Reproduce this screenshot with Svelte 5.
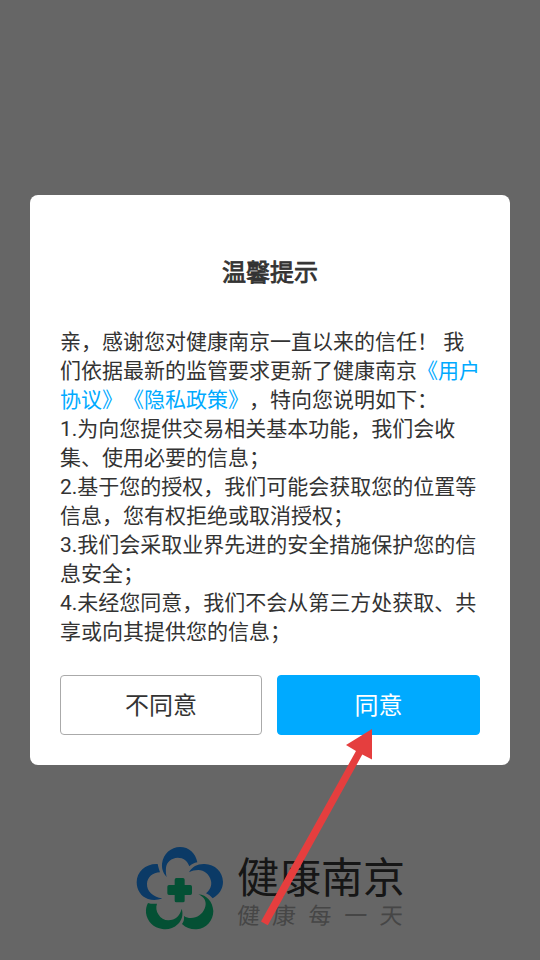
<script>
	let show = true;

	const title = '温馨提示';
	const items = [
		'1.为向您提供交易相关基本功能，我们会收集、使用必要的信息；',
		'2.基于您的授权，我们可能会获取您的位置等信息，您有权拒绝或取消授权；',
		'3.我们会采取业界先进的安全措施保护您的信息安全；',
		'4.未经您同意，我们不会从第三方处获取、共享或向其提供您的信息；'
	];

	function close() {
		show = false;
	}
</script>

<div class="splash">
	<div class="brand">
		<svg class="logo" viewBox="45 30 270 260">
			<g fill="#1c91ff">
				<path d="M140 126C128 112 125 99 126 86C130 56 153 36 180 36C207 36 227 54 232 82C222 84 215 87 208 94C203 77 190 68 173 68C154 69 140 81 138 98C137 109 138 117 140 126Z" />
				<path d="M207 112C217 94 233 86 254 87C285 88 308 110 309 140C309 161 298 178 278 190C272 183 266 178 258 175C271 164 276 151 273 138C269 118 252 105 235 105C225 105 216 107 207 112Z" />
				<path d="M113 87C115 96 117 103 120 112C98 112 82 127 81 146C80 168 98 186 127 190C112 196 98 196 84 192C63 185 50 165 50 142C50 109 78 85 113 87Z" />
			</g>
			<g fill="#0cc882">
				<path d="M84 204C93 207 101 207 111 206C107 217 109 229 115 238C122 250 133 256 145 256C166 255 180 243 185 221C191 240 185 256 174 267C160 281 144 284 127 282C101 279 81 259 78 234C77 223 79 213 84 204Z" />
				<path d="M235 178C261 180 278 201 280 228C280 257 259 280 230 283C213 284 199 279 186 267C191 260 193 253 192 243C202 250 214 251 226 247C244 241 256 225 257 207C257 193 248 184 235 178Z" />
				<path d="M169 129H189Q194 129 194 134V150H211Q216 150 216 155V175Q216 180 211 180H194V197Q194 202 189 202H169Q164 202 164 197V180H147Q142 180 142 175V155Q142 150 147 150H164V134Q164 129 169 129Z" />
			</g>
		</svg>
		<div class="brand-text">
			<div class="name">健康南京</div>
			<div class="slogan"><span>健</span><span>康</span><span>每</span><span>一</span><span>天</span></div>
		</div>
	</div>
</div>

{#if show}
	<div class="modal-overlay">
		<div class="modal-content">
			<h1>{title}</h1>
			<div class="text">
				亲，感谢您对健康南京一直以来的信任！ 我们依据最新的监管要求更新了健康南京<span class="link">《用户协议》</span><span class="link">《隐私政策》</span>，特向您说明如下：
				{#each items as item}
					<div>{item}</div>
				{/each}
			</div>
			<div class="buttons">
				<button on:click={close}>不同意</button>
				<button class="agree" on:click={close}>同意</button>
			</div>
		</div>
	</div>
{/if}

<!-- arrow pointing at the agree button -->
<svg class="arrow" viewBox="0 0 120 205">
	<path d="M112 4L112 34.5L102.3 29.5L7.8 200.3L1 196.5L96 26L86 20Z" fill="#e53e3e" />
</svg>

<style>
	:global(body) {
		margin: 0;
		background: #fff;
	}

	.splash {
		height: 960px;
		box-sizing: border-box;
		padding: 0 0 27px 135px;
		display: flex;
		align-items: flex-end;
		font-family: 'Noto Sans CJK SC', sans-serif;
	}

	.brand {
		display: flex;
		align-items: flex-start;
		gap: 12px;
		height: 88px;
	}

	.logo {
		width: 90px;
		height: 86.67px;
	}

	.name {
		height: 56px;
		font-size: 42px;
		line-height: 59px;
		color: #373737;
	}

	.slogan {
		display: flex;
		justify-content: space-between;
		width: 166px;
		font-size: 23px;
		font-weight: 400;
		line-height: 27px;
		color: #b0b0b0;
		transform: skewX(-5deg);
	}

	.modal-overlay {
		position: fixed;
		top: 0;
		left: 0;
		width: 100%;
		height: 100%;
		display: flex;
		align-items: center;
		justify-content: center;
		background-color: rgba(0, 0, 0, 0.6);
		z-index: 2;
	}

	.modal-content {
		box-sizing: border-box;
		width: 480px;
		height: 570px;
		padding: 61px 30px 30px;
		border-radius: 8px;
		background: #fff;
		color: #333;
		font-family: Roboto, 'Noto Sans CJK SC', sans-serif;
		text-spacing-trim: space-all;
	}

	h1 {
		margin: 0 0 37px;
		font-size: 24px;
		font-weight: normal;
		line-height: 35px;
		text-align: center;
		-webkit-text-stroke: 0.8px #333;
	}

	.text {
		height: 347px;
		font-size: 21px;
		line-height: 29px;
	}

	.link {
		color: #00aaff;
	}

	.buttons {
		display: flex;
		gap: 15px;
	}

	button {
		width: 202px;
		height: 60px;
		padding: 0 0 3px;
		border: 1px solid #aaa;
		border-radius: 4px;
		background: #fff;
		color: #333;
		font-family: inherit;
		font-size: 24px;
		cursor: pointer;
	}

	.agree {
		width: 203px;
		border-color: #00aaff;
		background: #00aaff;
		color: #fff;
	}

	.arrow {
		position: fixed;
		left: 260px;
		top: 725px;
		width: 120px;
		height: 205px;
		z-index: 3;
		pointer-events: none;
	}
</style>
